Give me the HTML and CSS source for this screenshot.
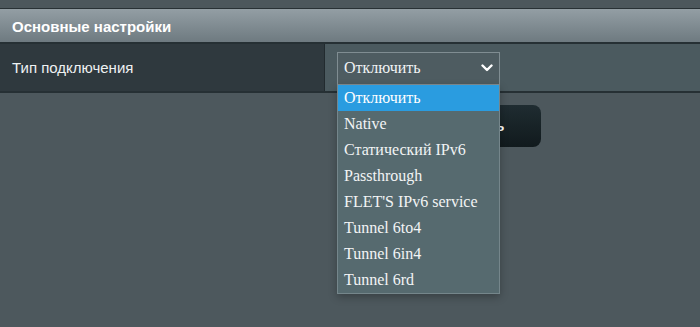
FILE: index.html
```html
<!DOCTYPE html>
<html lang="ru">
<head>
<meta charset="utf-8">
<link rel="stylesheet" href="styles.css">
</head>
<body>
<div class="page">
  <div class="topband"></div>
  <div class="section">
    <div class="section-head">Основные настройки</div>
    <div class="row">
      <div class="label">Тип подключения</div>
      <div class="value">
        <div class="select-wrap">
          <div class="select">
            <span>Отключить</span>
            <svg class="chev" width="12" height="8" viewBox="0 0 12 8"><polyline points="1.5,1.5 6,6 10.5,1.5" fill="none" stroke="#fff" stroke-width="2.4" stroke-linecap="round" stroke-linejoin="round"/></svg>
          </div>
          <ul class="menu">
            <li class="sel">Отключить</li>
            <li>Native</li>
            <li>Статический IPv6</li>
            <li>Passthrough</li>
            <li>FLET'S IPv6 service</li>
            <li>Tunnel 6to4</li>
            <li>Tunnel 6in4</li>
            <li>Tunnel 6rd</li>
          </ul>
        </div>
      </div>
    </div>
  </div>
  <div class="actions">
    <button class="apply">Применить</button>
  </div>
</div>
</body>
</html>
```
FILE: styles.css
```css
html, body {
  margin: 0;
  padding: 0;
}
body {
  background: #4d585d;
  font-family: "Liberation Sans", Arial, sans-serif;
}
.page {
  width: 700px;
  height: 327px;
  background: #4d585d;
  overflow: hidden;
}
.topband {
  height: 8px;
  background: #4c575c;
}
.section {
  border-top: 1px solid #283135;
}
.section-head {
  height: 35px;
  box-sizing: border-box;
  padding-left: 12px;
  padding-top: 2px;
  display: flex;
  align-items: center;
  background: linear-gradient(#939ea4, #6e7a80);
  color: #fff;
  font-weight: bold;
  font-size: 15px;
  border-bottom: 2px solid #263034;
}
.row {
  display: flex;
  height: 49px;
  box-sizing: border-box;
  border-bottom: 2px solid #263034;
}
.label {
  width: 325px;
  background: #2f393e;
  border-right: 1px solid #222b2f;
  color: #eef1f2;
  font-size: 15px;
  padding-left: 12px;
  box-sizing: border-box;
  display: flex;
  align-items: center;
}
.value {
  flex: 1;
  background: #4b5a5f;
  padding-left: 12px;
  padding-top: 1px;
  display: flex;
  align-items: center;
}
.select-wrap {
  position: relative;
}
.select {
  width: 163px;
  height: 33px;
  box-sizing: border-box;
  border: 1px solid #808d92;
  background: #4e5c61;
  color: #f2f4f5;
  font-family: "Liberation Serif", "Times New Roman", serif;
  font-size: 16px;
  display: flex;
  align-items: center;
  justify-content: space-between;
  padding: 0 6px 0 6px;
}
.chev {
  display: block;
}
.menu {
  position: absolute;
  top: 33px;
  left: 0;
  width: 163px;
  box-sizing: border-box;
  margin: 0;
  padding: 0;
  list-style: none;
  background: #566a6f;
  border: 1px solid #75868b;
  border-top: none;
  box-shadow: 0 3px 8px rgba(0, 0, 0, 0.28);
  font-family: "Liberation Serif", "Times New Roman", serif;
  font-size: 16px;
  color: #f2f4f5;
  z-index: 2;
}
.menu li {
  height: 26px;
  line-height: 26px;
  padding-left: 6px;
  white-space: nowrap;
}
.menu li.sel {
  background: #2a9ce0;
  color: #fff;
}
.actions {
  display: flex;
  padding-top: 12px;
  padding-left: 400px;
}
.apply {
  width: 141px;
  height: 42px;
  border: none;
  border-radius: 8px;
  padding: 0 10px 0 0;
  background: linear-gradient(#1f2c31, #111a1d);
  color: #fff;
  font-family: "Liberation Sans", Arial, sans-serif;
  font-weight: bold;
  font-size: 14px;
}
```
